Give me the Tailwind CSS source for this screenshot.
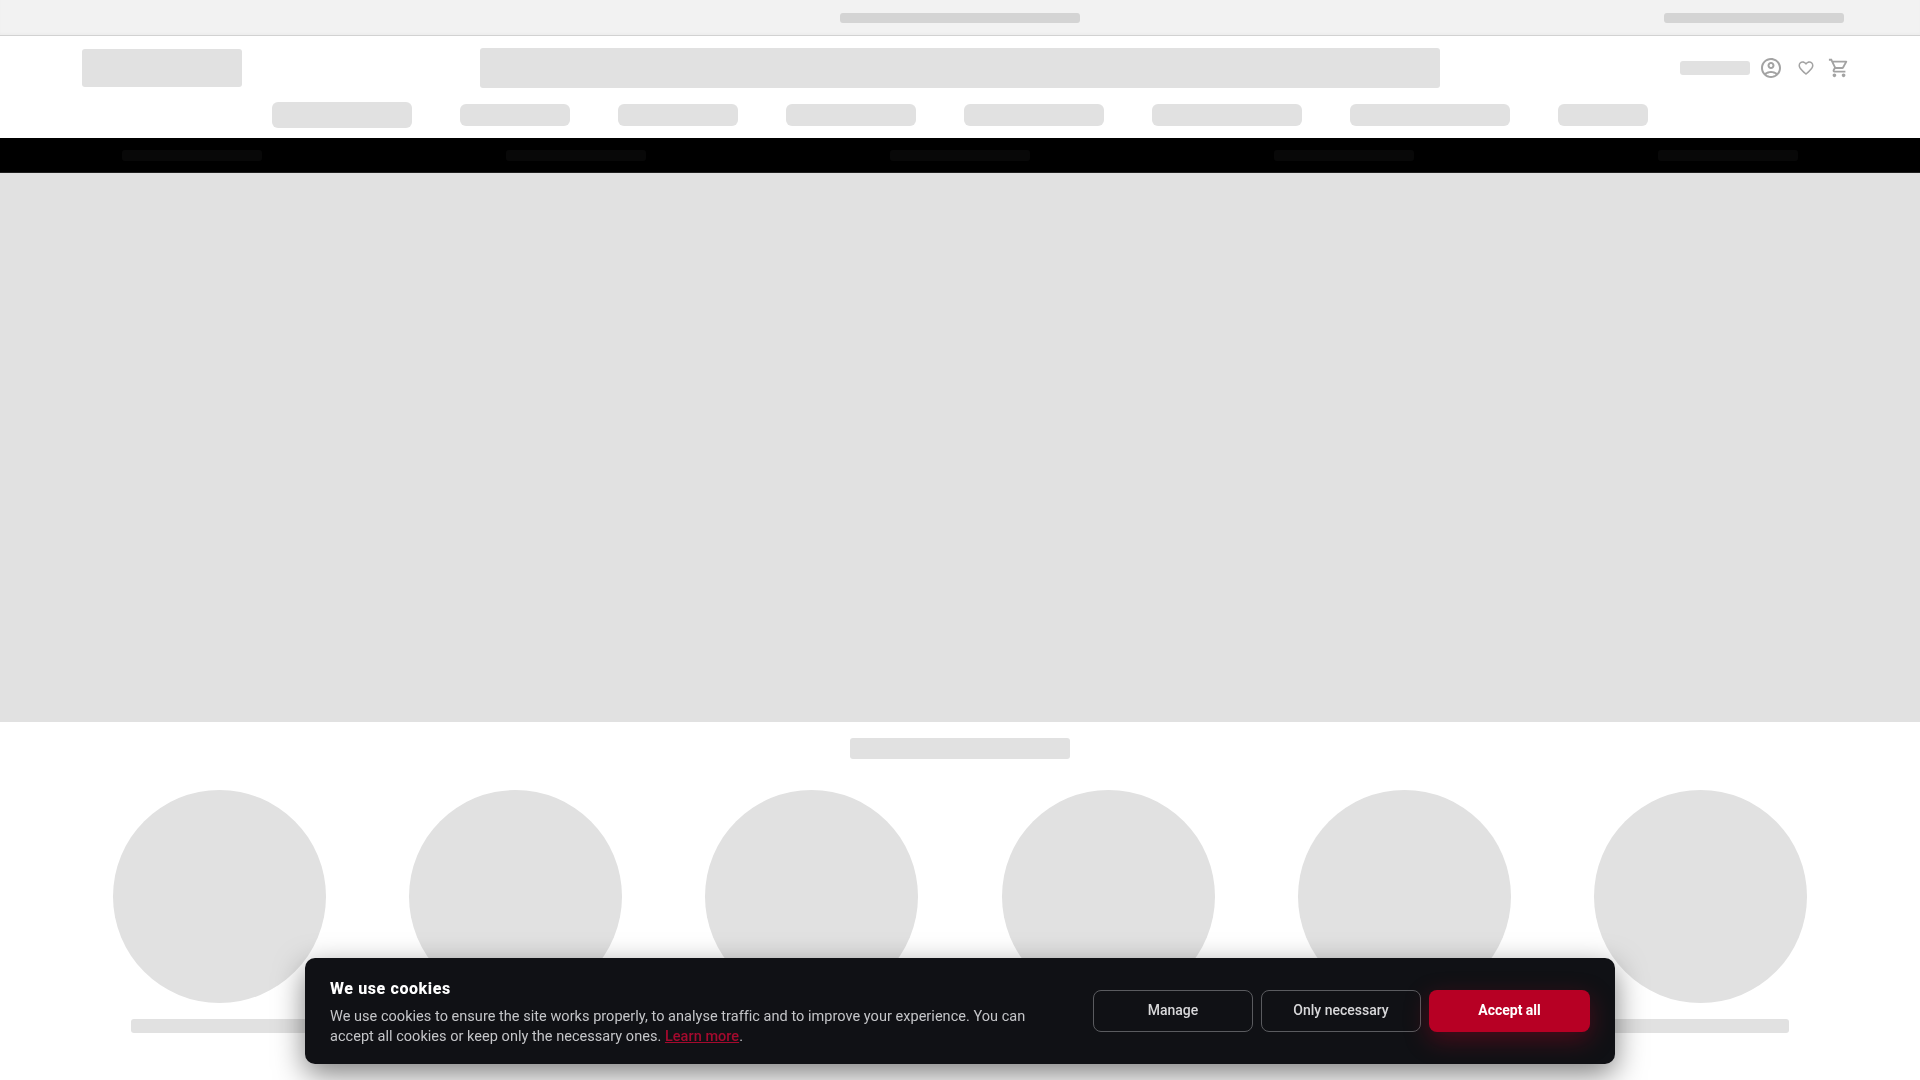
<!DOCTYPE html>
<html lang="en">
<head>
<meta charset="utf-8">
<title>Shop</title>
<script src="https://cdn.jsdelivr.net/npm/@tailwindcss/browser@4"></script>
</head>
<body class="h-screen overflow-hidden bg-white font-['Roboto',sans-serif]">
<div class="relative h-[36px] border-b border-[#d2d2d2] bg-[#f2f2f2] shadow-[inset_0_-2px_2px_rgba(0,0,0,0.02)]">
  <div class="flex h-[35px] items-start justify-center pt-[13px]">
    <div class="h-[10px] w-[240px] rounded-[3px] bg-[#d4d4d4]"></div>
  </div>
  <div class="absolute top-[13px] left-[1664px] h-[10px] w-[180px] rounded-[3px] bg-[#d4d4d4]"></div>
</div>
<header class="h-[102px] bg-white pt-[12px]">
  <div class="grid h-[40px] grid-cols-[398px_960px_1fr] items-center pl-[82px]">
    <div class="h-[38px] w-[160px] rounded-[3px] bg-[#e1e1e1]"></div>
    <div class="h-[40px] rounded-[3px] bg-[#e1e1e1]"></div>
    <div class="flex items-center pl-[240px]">
      <div class="h-[14px] w-[70px] rounded-[3px] bg-[#e1e1e1]"></div>
      <svg class="ml-[9px] h-[24px] w-[24px] fill-[#a3a3a3]" viewBox="0 0 24 24"><path d="M12 2C6.48 2 2 6.48 2 12s4.48 10 10 10 10-4.48 10-10S17.52 2 12 2zM7.35 18.5C8.66 17.56 10.26 17 12 17s3.34.56 4.65 1.5c-1.31.94-2.91 1.5-4.65 1.5s-3.34-.56-4.65-1.5zm10.79-1.38C16.45 15.8 14.32 15 12 15s-4.45.8-6.14 2.12C4.7 15.73 4 13.95 4 12c0-4.42 3.58-8 8-8s8 3.58 8 8c0 1.95-.7 3.73-1.86 5.12z"/><path d="M12 6c-1.93 0-3.5 1.57-3.5 3.5S10.07 13 12 13s3.5-1.57 3.5-3.5S13.93 6 12 6zm0 5c-.83 0-1.5-.67-1.5-1.5S11.17 8 12 8s1.5.67 1.5 1.5S12.83 11 12 11z"/></svg>
      <svg class="ml-[14px] h-[18px] w-[18px] fill-[#a3a3a3]" viewBox="0 0 24 24"><path d="M16.5 3c-1.74 0-3.41.81-4.5 2.09C10.91 3.81 9.24 3 7.5 3 4.42 3 2 5.42 2 8.5c0 3.78 3.4 6.86 8.55 11.54L12 21.35l1.45-1.32C18.6 15.36 22 12.28 22 8.5 22 5.42 19.58 3 16.5 3zm-4.4 15.55l-.1.1-.1-.1C7.14 14.24 4 11.39 4 8.5 4 6.5 5.5 5 7.5 5c1.54 0 3.04.99 3.57 2.36h1.87C13.46 5.99 14.96 5 16.5 5c2 0 3.5 1.5 3.5 3.5 0 2.89-3.14 5.74-7.9 10.05z"/></svg>
      <svg class="ml-[13px] h-[22px] w-[22px] fill-[#a3a3a3]" viewBox="0 0 24 24"><path d="M15.55 13c.75 0 1.41-.41 1.75-1.03l3.58-6.49c.37-.66-.11-1.48-.87-1.48H5.21l-.94-2H1v2h2l3.6 7.59-1.35 2.44C4.52 15.37 5.48 17 7 17h12v-2H7l1.1-2h7.45zM6.16 6h12.15l-2.76 5H8.53L6.16 6zM7 18c-1.1 0-1.99.9-1.99 2S5.9 22 7 22s2-.9 2-2-.9-2-2-2zm10 0c-1.1 0-1.99.9-1.99 2s.89 2 1.99 2 2-.9 2-2-.9-2-2-2z"/></svg>
    </div>
  </div>
  <nav class="mt-[14px] flex h-[26px] items-center justify-center gap-[48px]">
    <div class="h-[26px] w-[140px] rounded-[6px] bg-[#e1e1e1]"></div>
    <div class="h-[22px] w-[110px] rounded-[6px] bg-[#e1e1e1]"></div>
    <div class="h-[22px] w-[120px] rounded-[6px] bg-[#e1e1e1]"></div>
    <div class="h-[22px] w-[130px] rounded-[6px] bg-[#e1e1e1]"></div>
    <div class="h-[22px] w-[140px] rounded-[6px] bg-[#e1e1e1]"></div>
    <div class="h-[22px] w-[150px] rounded-[6px] bg-[#e1e1e1]"></div>
    <div class="h-[22px] w-[160px] rounded-[6px] bg-[#e1e1e1]"></div>
    <div class="h-[22px] w-[90px] rounded-[6px] bg-[#e1e1e1]"></div>
  </nav>
</header>
<div class="grid h-[35px] grid-cols-5 justify-items-center border-b border-[#1f1f1f] bg-black pt-[12px]">
  <div class="h-[11px] w-[140px] rounded-[3px] bg-[#080808]"></div>
  <div class="h-[11px] w-[140px] rounded-[3px] bg-[#080808]"></div>
  <div class="h-[11px] w-[140px] rounded-[3px] bg-[#080808]"></div>
  <div class="h-[11px] w-[140px] rounded-[3px] bg-[#080808]"></div>
  <div class="h-[11px] w-[140px] rounded-[3px] bg-[#080808]"></div>
</div>
<div class="h-[549px] bg-[#e1e1e1]"></div>
<main class="px-[81px]">
  <div class="mx-auto mt-[16px] h-[21px] w-[220px] rounded-[3px] bg-[#e1e1e1]"></div>
  <div class="mt-[31px] grid grid-cols-6 gap-[20px]">
    <div class="flex flex-col items-center gap-[16px]"><div class="h-[213px] w-[213px] rounded-full bg-[#e1e1e1]"></div><div class="h-[14px] w-[176px] rounded-[3px] bg-[#e1e1e1]"></div></div>
    <div class="flex flex-col items-center gap-[16px]"><div class="h-[213px] w-[213px] rounded-full bg-[#e1e1e1]"></div><div class="h-[14px] w-[176px] rounded-[3px] bg-[#e1e1e1]"></div></div>
    <div class="flex flex-col items-center gap-[16px]"><div class="h-[213px] w-[213px] rounded-full bg-[#e1e1e1]"></div><div class="h-[14px] w-[176px] rounded-[3px] bg-[#e1e1e1]"></div></div>
    <div class="flex flex-col items-center gap-[16px]"><div class="h-[213px] w-[213px] rounded-full bg-[#e1e1e1]"></div><div class="h-[14px] w-[176px] rounded-[3px] bg-[#e1e1e1]"></div></div>
    <div class="flex flex-col items-center gap-[16px]"><div class="h-[213px] w-[213px] rounded-full bg-[#e1e1e1]"></div><div class="h-[14px] w-[176px] rounded-[3px] bg-[#e1e1e1]"></div></div>
    <div class="flex flex-col items-center gap-[16px]"><div class="h-[213px] w-[213px] rounded-full bg-[#e1e1e1]"></div><div class="h-[14px] w-[176px] rounded-[3px] bg-[#e1e1e1]"></div></div>
  </div>
</main>
<div class="fixed bottom-[16px] left-[305px] flex h-[106px] w-[1310px] items-center justify-between rounded-[10px] bg-[#101115] pr-[25px] pl-[25px] shadow-[0_10px_30px_rgba(0,0,0,0.5)]">
  <div class="w-[720px] self-start pt-[21px]">
    <h2 class="text-[16px] leading-[20px] font-extrabold tracking-[0.6px] text-white">We use cookies</h2>
    <p class="mt-[8px] text-[14.5px] leading-[20px] tracking-[0.035px] text-[#c4c5c8]">We use cookies to ensure the site works properly, to analyse traffic and to improve your experience. You can<br>accept all cookies or keep only the necessary ones. <a href="#" class="font-medium text-[#a50a2e] underline">Learn more</a>.</p>
  </div>
  <div class="flex gap-[8px]">
    <button class="h-[42px] w-[160px] rounded-[8px] border border-[#5a5b5f] pb-[2px] text-[14px] font-medium text-[#d8d8da]">Manage</button>
    <button class="h-[42px] w-[160px] rounded-[8px] border border-[#5a5b5f] pb-[2px] text-[14px] font-medium text-[#d8d8da]">Only necessary</button>
    <button class="h-[42px] w-[161px] rounded-[8px] bg-[#b70024] pb-[2px] text-[14px] font-bold text-white shadow-[0_8px_24px_rgba(183,0,36,0.35)]">Accept all</button>
  </div>
</div>
</body>
</html>
